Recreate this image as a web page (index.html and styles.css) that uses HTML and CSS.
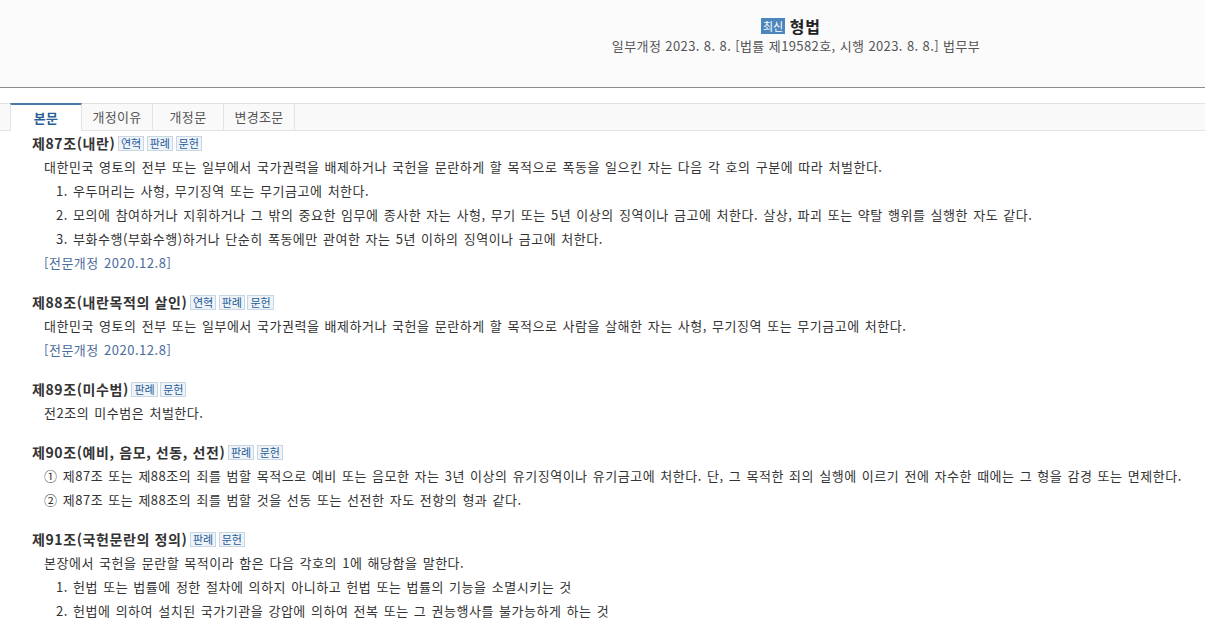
FILE: index.html
```html
<!DOCTYPE html>
<html lang="ko">
<head>
<meta charset="utf-8">
<title>형법</title>
<link rel="stylesheet" href="styles.css">
</head>
<body>
<header class="law-head">
  <div class="law-title"><span class="badge">최신</span> <strong>형법</strong></div>
  <div class="law-sub">일부개정 2023. 8. 8. [법률 제19582호, 시행 2023. 8. 8.] 법무부</div>
</header>
<nav class="tabs">
  <a class="tab active">본문</a>
  <a class="tab">개정이유</a>
  <a class="tab">개정문</a>
  <a class="tab">변경조문</a>
</nav>
<main class="content">
  <section class="article">
    <h3 class="art-title">제87조(내란) <span class="tag">연혁</span> <span class="tag">판례</span> <span class="tag">문헌</span></h3>
    <p class="para">대한민국 영토의 전부 또는 일부에서 국가권력을 배제하거나 국헌을 문란하게 할 목적으로 폭동을 일으킨 자는 다음 각 호의 구분에 따라 처벌한다.</p>
    <p class="item">1. 우두머리는 사형, 무기징역 또는 무기금고에 처한다.</p>
    <p class="item">2. 모의에 참여하거나 지휘하거나 그 밖의 중요한 임무에 종사한 자는 사형, 무기 또는 5년 이상의 징역이나 금고에 처한다. 살상, 파괴 또는 약탈 행위를 실행한 자도 같다.</p>
    <p class="item">3. 부화수행(부화수행)하거나 단순히 폭동에만 관여한 자는 5년 이하의 징역이나 금고에 처한다.</p>
    <p class="para note">[전문개정 2020.12.8]</p>
  </section>
  <section class="article">
    <h3 class="art-title">제88조(내란목적의 살인) <span class="tag">연혁</span> <span class="tag">판례</span> <span class="tag">문헌</span></h3>
    <p class="para">대한민국 영토의 전부 또는 일부에서 국가권력을 배제하거나 국헌을 문란하게 할 목적으로 사람을 살해한 자는 사형, 무기징역 또는 무기금고에 처한다.</p>
    <p class="para note">[전문개정 2020.12.8]</p>
  </section>
  <section class="article">
    <h3 class="art-title">제89조(미수범) <span class="tag">판례</span> <span class="tag">문헌</span></h3>
    <p class="para">전2조의 미수범은 처벌한다.</p>
  </section>
  <section class="article">
    <h3 class="art-title">제90조(예비, 음모, 선동, 선전) <span class="tag">판례</span> <span class="tag">문헌</span></h3>
    <p class="para">① 제87조 또는 제88조의 죄를 범할 목적으로 예비 또는 음모한 자는 3년 이상의 유기징역이나 유기금고에 처한다. 단, 그 목적한 죄의 실행에 이르기 전에 자수한 때에는 그 형을 감경 또는 면제한다.</p>
    <p class="para">② 제87조 또는 제88조의 죄를 범할 것을 선동 또는 선전한 자도 전항의 형과 같다.</p>
  </section>
  <section class="article">
    <h3 class="art-title">제91조(국헌문란의 정의) <span class="tag">판례</span> <span class="tag">문헌</span></h3>
    <p class="para">본장에서 국헌을 문란할 목적이라 함은 다음 각호의 1에 해당함을 말한다.</p>
    <p class="item">1. 헌법 또는 법률에 정한 절차에 의하지 아니하고 헌법 또는 법률의 기능을 소멸시키는 것</p>
    <p class="item">2. 헌법에 의하여 설치된 국가기관을 강압에 의하여 전복 또는 그 권능행사를 불가능하게 하는 것</p>
  </section>
</main>
</body>
</html>
```

FILE: styles.css
```css
html, body {
  margin: 0;
  padding: 0;
  background: #ffffff;
  font-family: "Noto Sans CJK KR", "Noto Sans", sans-serif;
  font-size: 13px;
  color: #333333;
  overflow: hidden;
}

.law-head {
  height: 71px;
  padding: 16px 0 0 385px;
  background: #fbfbfc;
  border-bottom: 1px solid #8c8c8c;
  text-align: center;
}

.law-title {
  line-height: 20px;
  font-size: 16px;
  color: #222222;
  padding-right: 8px;
}

.law-title strong {
  font-weight: 700;
  letter-spacing: 1px;
}

.badge {
  display: inline-block;
  background: #4c86bd;
  color: #ffffff;
  font-size: 11px;
  line-height: 16px;
  padding: 0 2px;
  vertical-align: 2px;
}

.law-sub {
  line-height: 20px;
  color: #555555;
  font-size: 13px;
  letter-spacing: 0.4px;
  padding-left: 2px;
}

.tabs {
  display: flex;
  margin-top: 15px;
  height: 26px;
  padding-left: 10px;
  background: #f9f9f9;
  border-top: 1px solid #e3e3e3;
  border-bottom: 1px solid #e3e3e3;
}

.tab {
  width: 70px;
  border-right: 1px solid #e3e3e3;
  text-align: center;
  line-height: 26px;
  color: #555555;
  font-size: 13px;
  letter-spacing: 0.3px;
}

.tab.active {
  background: #ffffff;
  color: #2b5f93;
  font-weight: 700;
  border-left: 1px solid #e3e3e3;
  border-top: 2px solid #4a7aa8;
  margin-top: -1px;
  line-height: 26px;
  height: 26px;
  margin-bottom: -1px;
}

.content {
  padding-left: 32px;
}

.article {
  margin-bottom: 15px;
}

.art-title {
  margin: 0;
  font-size: 14px;
  font-weight: 700;
  line-height: 24px;
  color: #333333;
  letter-spacing: 0.6px;
}

.tag {
  display: inline-block;
  font-size: 11px;
  font-weight: 400;
  line-height: 13px;
  padding: 0 2px;
  letter-spacing: 0;
  color: #1f5b98;
  background: #eef3f8;
  border: 1px solid #c8d5e2;
  vertical-align: 1px;
  margin-left: -2px;
}

.para {
  margin: 0;
  padding-left: 12px;
  line-height: 24px;
  word-spacing: 1px;
  letter-spacing: 0.52px;
}

.item {
  margin: 0;
  padding-left: 24px;
  line-height: 24px;
  word-spacing: 1px;
  letter-spacing: 0.52px;
}

.note {
  color: #4a6c9b;
}
```
